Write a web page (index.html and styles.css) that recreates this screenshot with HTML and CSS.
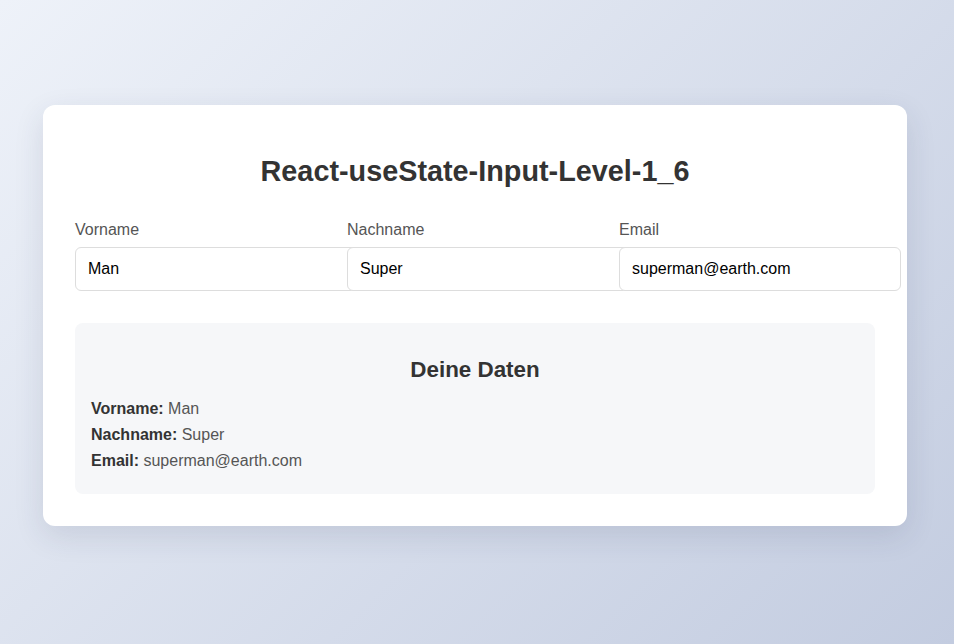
FILE: index.html
```html
<!DOCTYPE html>
<html lang="de">
<head>
<meta charset="utf-8">
<title>React-useState-Input-Level-1_6</title>
<link rel="stylesheet" href="styles.css">
</head>
<body>
<div class="card">
  <h1 class="title">React-useState-Input-Level-1_6</h1>
  <div class="form">
    <div class="field">
      <label class="label" for="vorname">Vorname</label>
      <input class="input" id="vorname" type="text" value="Man">
    </div>
    <div class="field">
      <label class="label" for="nachname">Nachname</label>
      <input class="input" id="nachname" type="text" value="Super">
    </div>
    <div class="field">
      <label class="label" for="email">Email</label>
      <input class="input" id="email" type="email" value="superman@earth.com">
    </div>
  </div>
  <div class="data">
    <h3 class="data-title">Deine Daten</h3>
    <p class="row"><strong>Vorname:</strong> Man</p>
    <p class="row"><strong>Nachname:</strong> Super</p>
    <p class="row"><strong>Email:</strong> superman@earth.com</p>
  </div>
</div>
</body>
</html>
```
FILE: styles.css
```css
html, body {
  margin: 0;
  height: 100%;
}
body {
  box-sizing: border-box;
  font-family: "Liberation Sans", Arial, sans-serif;
  background: linear-gradient(135deg, #eef2f9 0%, #c3cce0 100%);
  display: flex;
  justify-content: center;
  align-items: flex-start;
  padding: 105px 4px 0 0;
  color: #333;
}
.card {
  width: 800px;
  padding: 32px;
  background: #fff;
  border-radius: 12px;
  box-shadow: 0 10px 30px rgba(40, 50, 80, 0.12);
}
.title {
  font-size: 28.8px;
  font-weight: bold;
  text-align: center;
  color: #333;
  margin: 18px 0 31px;
  line-height: 33px;
}
.form {
  display: grid;
  grid-template-columns: repeat(3, 256px);
  gap: 16px;
}
.label {
  display: block;
  font-size: 16px;
  color: #555;
  line-height: 18px;
  margin: 0 0 8px;
  padding-top: 2px;
}
.input {
  width: 256px;
  padding: 12px;
  border: 1px solid #ddd;
  border-radius: 6px;
  font-family: "Liberation Sans", Arial, sans-serif;
  font-size: 16px;
  line-height: 18px;
  color: #000;
  background: #fff;
  margin: 0;
}
.data {
  margin-top: 32px;
  background: #f6f7f9;
  border-radius: 8px;
  padding: 16px;
}
.data-title {
  text-align: center;
  font-size: 22.4px;
  font-weight: bold;
  color: #333;
  margin: 19px 0 18px;
  line-height: 24px;
}
.row {
  margin: 8px 0;
  font-size: 16px;
  line-height: 18px;
  color: #555;
}
.row strong {
  color: #333;
}
```
